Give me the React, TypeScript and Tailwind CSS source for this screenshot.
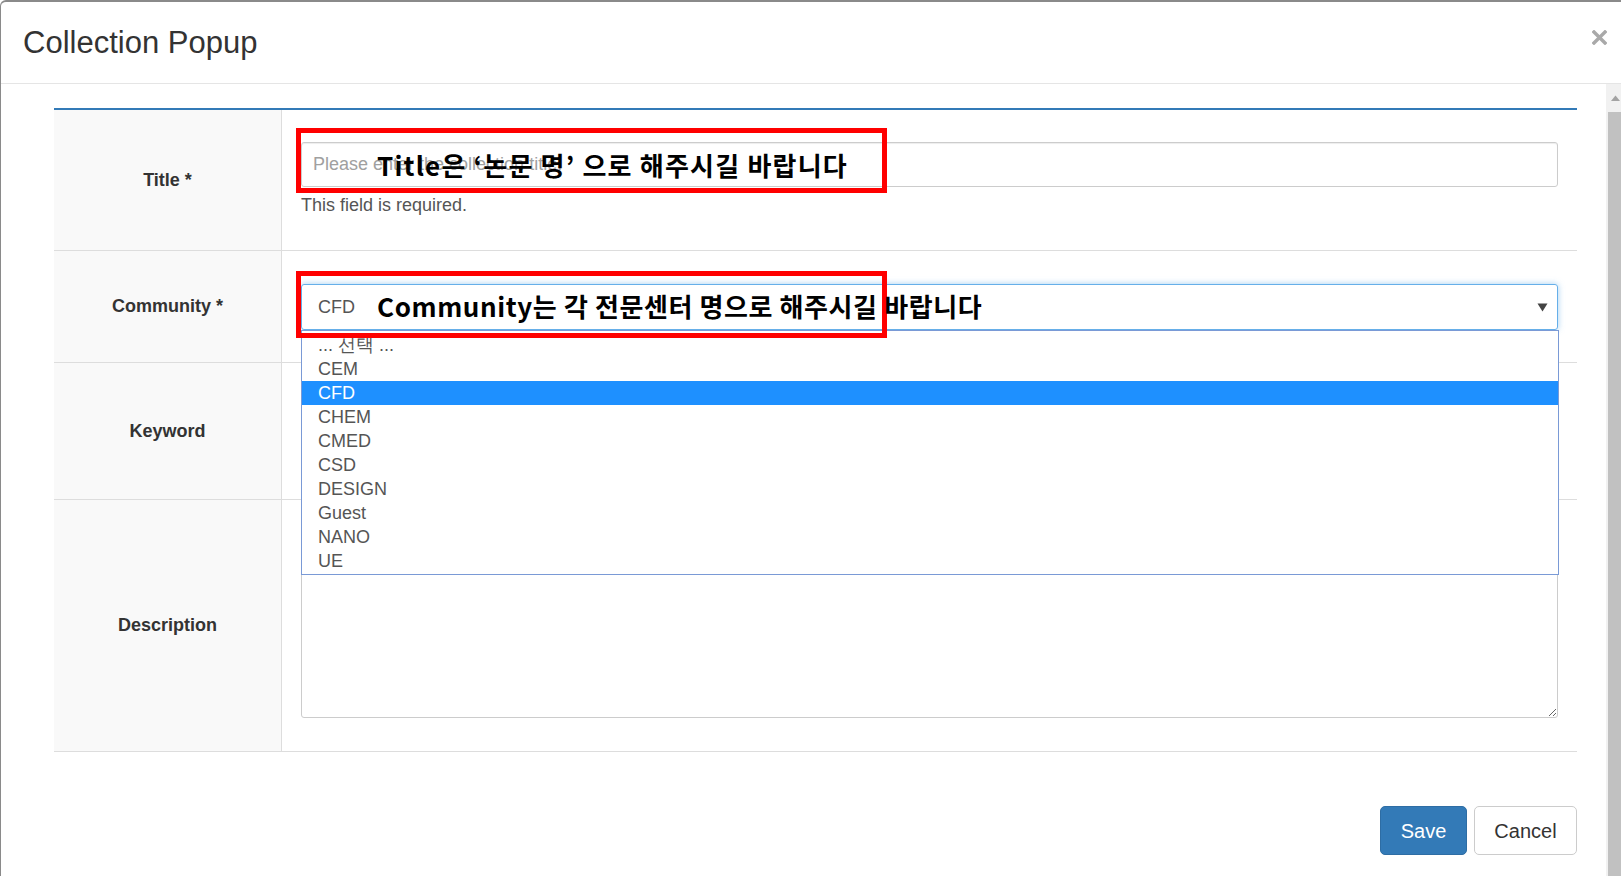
import React from 'react';

const SANS = { fontFamily: '"Liberation Sans", Arial, sans-serif' };
const KR = { fontFamily: '"Noto Sans CJK KR", "Noto Sans", sans-serif' };

const COMMUNITIES = ['... 선택 ...', 'CEM', 'CFD', 'CHEM', 'CMED', 'CSD', 'DESIGN', 'Guest', 'NANO', 'UE'];

const Label: React.FC<{ text: string }> = ({ text }) => (
  <div className="w-[228px] shrink-0 bg-[#f9f9f9] border-r border-[#dddddd] flex items-center justify-center text-[18px] font-bold text-[#333333]">
    {text}
  </div>
);

const App: React.FC = () => {
  return (
    <div
      className="relative w-[1621px] h-[876px] overflow-hidden bg-white border-t-2 border-l border-[#8a8a8a] rounded-tl-md text-[#333333]"
      style={SANS}
    >
      {/* Header */}
      <div className="h-[82px] border-b border-[#e5e5e5] flex items-center justify-between pl-[22px] pr-[14px]">
        <h4 className="text-[31px] leading-none text-[#333333]">Collection Popup</h4>
        <svg width="15" height="15" viewBox="0 0 15 15" className="-mt-[10px]">
          <path d="M2 2 L13 13 M13 2 L2 13" stroke="#a9a9a9" strokeWidth="3.4" strokeLinecap="square" />
        </svg>
      </div>

      <div className="flex h-[792px]">
        {/* Body */}
        <div className="flex-1 pl-[53px] pr-[29px] pt-[24px]">
          <div className="border-t-2 border-[#337ab7]">
            {/* Title */}
            <div className="flex h-[141px] border-b border-[#dddddd]">
              <Label text="Title *" />
              <div className="flex-1 px-[19px] pt-[32px]">
                <input
                  className="w-full h-[45px] border border-[#cccccc] rounded-[3px] px-[11px] text-[18px] text-[#555555] placeholder:text-[#a0a0a0] shadow-[inset_0_1px_1px_rgba(0,0,0,0.075)] outline-none"
                  style={SANS}
                  placeholder="Please enter the collection title."
                />
                <div className="mt-[6px] text-[18px] leading-[24px] text-[#555555]">This field is required.</div>
              </div>
            </div>

            {/* Community */}
            <div className="flex h-[112px] border-b border-[#dddddd]">
              <Label text="Community *" />
              <div className="flex-1 px-[19px] pt-[33px]">
                <div className="relative">
                  <div className="h-[46px] border border-[#66afe9] rounded-[3px] shadow-[0_0_6px_rgba(102,175,233,0.6)] flex items-center justify-between pl-[16px] pr-[9px] text-[18px] text-[#555555]">
                    <span>CFD</span>
                    <svg width="11" height="9" viewBox="0 0 11 9">
                      <path d="M0.5 0.5 L10.5 0.5 L5.5 8.5 Z" fill="#444444" />
                    </svg>
                  </div>
                  {/* Open option list */}
                  <div className="absolute left-0 -right-[1px] top-full z-10 bg-white border border-[#7a9ad6] pt-[2px] pb-[1px]">
                    {COMMUNITIES.map((c) => (
                      <div
                        key={c}
                        className={
                          c === 'CFD'
                            ? 'h-[24px] leading-[24px] pl-[16px] text-[18px] bg-[#1e90ff] text-white'
                            : 'h-[24px] leading-[24px] pl-[16px] text-[18px] text-[#555555]'
                        }
                      >
                        {c}
                      </div>
                    ))}
                  </div>
                </div>
              </div>
            </div>

            {/* Keyword */}
            <div className="flex h-[137px] border-b border-[#dddddd]">
              <Label text="Keyword" />
              <div className="flex-1 px-[19px] flex items-center">
                <input className="w-full h-[45px] border border-[#cccccc] rounded-[3px] outline-none" />
              </div>
            </div>

            {/* Description */}
            <div className="flex h-[252px] border-b border-[#dddddd]">
              <Label text="Description" />
              <div className="flex-1 px-[19px] pt-[20px]">
                <textarea className="block w-full h-[198px] border border-[#cccccc] rounded-[3px] outline-none resize" />
              </div>
            </div>
          </div>

          {/* Footer buttons */}
          <div className="flex justify-end gap-[7px] mt-[54px]">
            <button className="w-[87px] h-[49px] rounded-[5px] bg-[#337ab7] border border-[#2e6da4] text-white text-[20px]">
              Save
            </button>
            <button className="w-[103px] h-[49px] rounded-[5px] bg-white border border-[#cccccc] text-[#333333] text-[20px]">
              Cancel
            </button>
          </div>
        </div>

        {/* Scrollbar */}
        <div className="w-[15px] shrink-0 bg-[#f1f1f1] flex flex-col items-end">
          <div className="w-full h-[28px] flex items-center justify-center">
            <svg width="9" height="6" viewBox="0 0 9 6" className="ml-[3px]">
              <path d="M0 6 L4.5 0.5 L9 6 Z" fill="#a3a3a3" />
            </svg>
          </div>
          <div className="w-[13px] flex-1 bg-[#c1c1c1]" />
        </div>
      </div>

      {/* Annotation overlays */}
      <div className="absolute left-[295px] top-[126px] w-[591px] h-[65px] border-[5px] border-[#ff0000] z-20" />
      <div className="absolute left-[295px] top-[269px] w-[591px] h-[67px] border-[5px] border-[#ff0000] z-20" />
      <div
        className="absolute left-[376px] top-[148px] text-[26px] leading-[30px] font-bold tracking-[1.2px] text-black z-20 whitespace-nowrap"
        style={KR}
      >
        Title은 ‘논문 명’ 으로 해주시길 바랍니다
      </div>
      <div
        className="absolute left-[376px] top-[289px] text-[26px] leading-[30px] font-bold tracking-[0.6px] text-black z-20 whitespace-nowrap"
        style={KR}
      >
        Community는 각 전문센터 명으로 해주시길 바랍니다
      </div>
    </div>
  );
};

export default App;
